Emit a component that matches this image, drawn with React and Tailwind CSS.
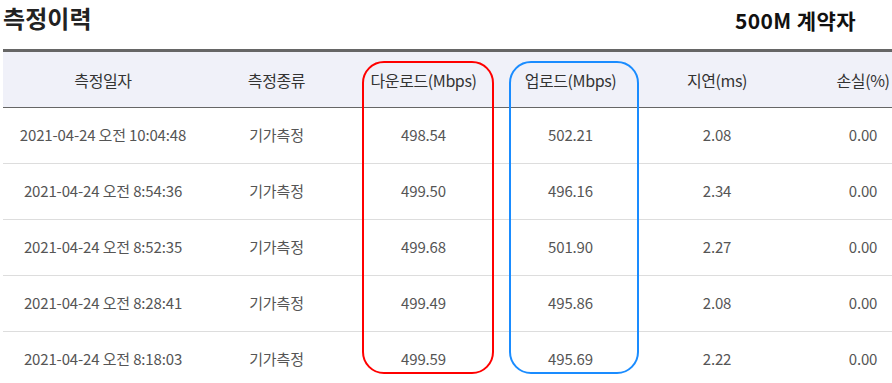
import React from "react";

const rows = [
  ["2021-04-24 오전 10:04:48", "기가측정", "498.54", "502.21", "2.08", "0.00"],
  ["2021-04-24 오전 8:54:36", "기가측정", "499.50", "496.16", "2.34", "0.00"],
  ["2021-04-24 오전 8:52:35", "기가측정", "499.68", "501.90", "2.27", "0.00"],
  ["2021-04-24 오전 8:28:41", "기가측정", "499.49", "495.86", "2.08", "0.00"],
  ["2021-04-24 오전 8:18:03", "기가측정", "499.59", "495.69", "2.22", "0.00"],
];

const headers = ["측정일자", "측정종류", "다운로드(Mbps)", "업로드(Mbps)", "지연(ms)", "손실(%)"];

const cols = "grid grid-cols-[200px_147px_147px_147px_146px_146px]";

export default function App() {
  return (
    <div
      className="relative w-[892px] h-[383px] overflow-hidden bg-white"
      style={{ fontFamily: '"Noto Sans CJK KR", "Noto Sans", sans-serif' }}
    >
      <div className="flex items-start justify-between h-[49px]">
        <div className="pl-[3px] pt-[0px] text-[24px] leading-[35px] font-bold text-[#222] tracking-[0.1px]">
          측정이력
        </div>
        <div className="pr-[36px] pt-[6px] text-[21px] leading-[28px] font-bold text-[#111] tracking-[0.4px]">
          500M 계약자
        </div>
      </div>
      <div className="ml-[3px] w-[933px] border-t-[3px] border-[#666]">
        <div className={`${cols} h-[56px] bg-[#f0f1f9] border-b border-[#666] text-[16px] text-[#333] tracking-[-0.4px]`}>
          {headers.map((h) => (
            <div key={h} className="flex items-center justify-center">
              {h}
            </div>
          ))}
        </div>
        {rows.map((r, i) => (
          <div key={i} className={`${cols} h-[56px] border-b border-[#ddd] text-[15px] text-[#555] tracking-[-0.15px]`}>
            {r.map((c, j) => (
              <div key={j} className="flex items-center justify-center">
                {c}
              </div>
            ))}
          </div>
        ))}
      </div>
      <div className="absolute left-[362px] top-[61px] w-[132px] h-[313px] rounded-[22px] border-2 border-[#ff0000]" />
      <div className="absolute left-[509px] top-[61px] w-[130px] h-[313px] rounded-[22px] border-2 border-[#1a8cff]" />
    </div>
  );
}
